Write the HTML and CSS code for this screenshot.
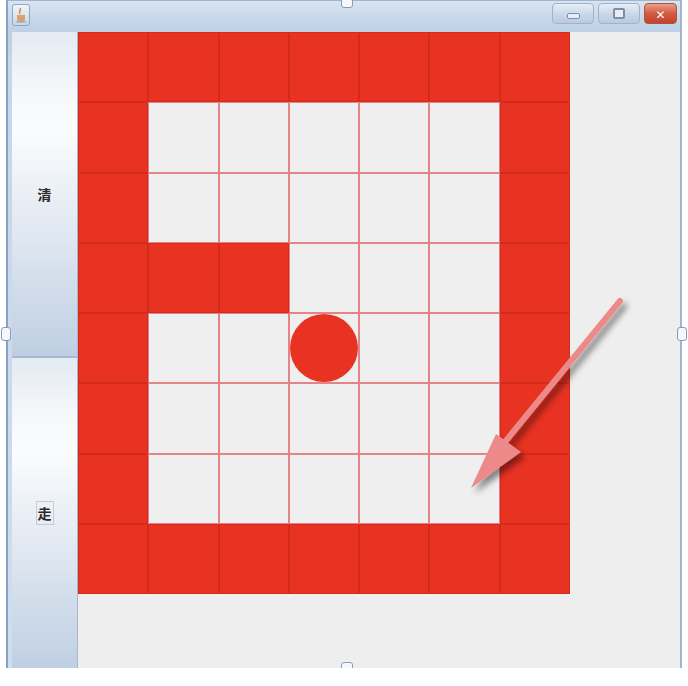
FILE: index.html
```html
<!DOCTYPE html>
<html>
<head>
<meta charset="utf-8">
<link rel="stylesheet" href="styles.css">
</head>
<body>
<div class="window">
  <div class="titlebar">
    <div class="appicon">
      <svg width="14" height="16" viewBox="0 0 14 16"><path d="M6 1 C8 3 4 4 6 7" stroke="#e08a3a" stroke-width="1.6" fill="none"/><path d="M3 8 h8 v4 a3 3 0 0 1 -3 3 h-2 a3 3 0 0 1 -3 -3z" fill="#d9a070"/><path d="M2 15 h10" stroke="#8aa0c0" stroke-width="1"/></svg>
    </div>
    <div class="spacer"></div>
    <div class="tbtn"><span class="min-glyph"></span></div>
    <div class="tbtn"><span class="max-glyph"></span></div>
    <div class="tbtn close"><span class="x-glyph">✕</span></div>
  </div>
  <div class="client">
    <div class="sidebar">
      <div class="sbtn"><span>清</span></div>
      <div class="sbtn"><span class="focus">走</span></div>
    </div>
    <div class="board">
      <div class="c r"></div><div class="c r"></div><div class="c r"></div><div class="c r"></div><div class="c r"></div><div class="c r"></div><div class="c r"></div>
      <div class="c r"></div><div class="c w"></div><div class="c w"></div><div class="c w"></div><div class="c w"></div><div class="c w"></div><div class="c r"></div>
      <div class="c r"></div><div class="c w"></div><div class="c w"></div><div class="c w"></div><div class="c w"></div><div class="c w"></div><div class="c r"></div>
      <div class="c r"></div><div class="c r"></div><div class="c r"></div><div class="c w"></div><div class="c w"></div><div class="c w"></div><div class="c r"></div>
      <div class="c r"></div><div class="c w"></div><div class="c w"></div><div class="c w"><span class="ball"></span></div><div class="c w"></div><div class="c w"></div><div class="c r"></div>
      <div class="c r"></div><div class="c w"></div><div class="c w"></div><div class="c w"></div><div class="c w"></div><div class="c w"></div><div class="c r"></div>
      <div class="c r"></div><div class="c w"></div><div class="c w"></div><div class="c w"></div><div class="c w"></div><div class="c w"></div><div class="c r"></div>
      <div class="c r"></div><div class="c r"></div><div class="c r"></div><div class="c r"></div><div class="c r"></div><div class="c r"></div><div class="c r"></div>
    </div>
  </div>
  <span class="handle h-top"></span>
  <span class="handle h-left"></span>
  <span class="handle h-right"></span>
  <span class="handle h-bottom"></span>
</div>
<svg class="arrow" width="688" height="686" viewBox="0 0 688 686">
  <defs>
    <filter id="sh" x="-20%" y="-20%" width="140%" height="140%">
      <feDropShadow dx="4" dy="5" stdDeviation="3" flood-color="#000" flood-opacity="0.45"/>
    </filter>
  </defs>
  <g filter="url(#sh)">
    <line x1="620" y1="301" x2="500" y2="448" stroke="#ec8a8a" stroke-width="6" stroke-linecap="round"/>
    <polygon points="471,488 496,434 521,452" fill="#ec8a8a"/>
  </g>
</svg>
</body>
</html>
```

FILE: styles.css
```css
html, body {
  margin: 0;
  padding: 0;
  background: #ffffff;
  font-family: "Noto Sans CJK SC", "DejaVu Sans", sans-serif;
}

.window {
  position: relative;
  margin-left: 6px;
  width: 676px;
  height: 668px;
  box-sizing: border-box;
  border-left: 2px solid #86a3c5;
  border-right: 2px solid #9fb6d1;
  border-top: 1px solid #9fb6d1;
  background: linear-gradient(to bottom, #d9e4f0 0px, #c6d6e8 20px, #bccfe4 33px, #c7d6e8 60px, #d0dded 100%);
  display: flex;
  flex-direction: column;
}

.titlebar {
  height: 31px;
  display: flex;
  align-items: center;
  padding: 0 3px 0 4px;
  gap: 4px;
}

.appicon {
  width: 16px;
  height: 20px;
  border: 1px solid #8fa7c4;
  border-radius: 3px;
  background: linear-gradient(#f2f5f9, #c9d6e5);
  display: flex;
  align-items: center;
  justify-content: center;
  margin-top: -4px;
}

.spacer { flex: 1; }

.tbtn {
  width: 40px;
  height: 19px;
  border: 1px solid #9eb2cb;
  border-radius: 4px;
  background: linear-gradient(#e6eef7, #c8d7e8 55%, #b9cbe0);
  display: flex;
  align-items: center;
  justify-content: center;
  margin-top: -6px;
}

.tbtn.close {
  width: 31px;
  border-color: #a8543e;
  background: linear-gradient(#e9a08a, #d25a40 50%, #c2442c);
}

.min-glyph {
  width: 11px;
  height: 4px;
  border-radius: 2px;
  background: #e8edf4;
  border: 1px solid #7d8fa6;
  margin-top: 5px;
}

.max-glyph {
  width: 8px;
  height: 7px;
  border-radius: 2px;
  border: 2px solid #7d8fa6;
  background: #e8edf4;
}

.x-glyph {
  color: #ffffff;
  font-size: 12px;
  font-weight: bold;
  line-height: 1;
}

.client {
  flex: 1;
  display: flex;
  margin-left: 4px;
  background: #eeeeee;
}

.sidebar {
  width: 66px;
  display: grid;
  grid-template-rows: 324px 1fr;
  gap: 2px;
  background: #aab9cc;
}

.sbtn {
  border-right: 1px solid #a7b8cc;
  background: linear-gradient(to bottom, #e4eaf2 0%, #f5f7fa 18%, #fbfcfd 30%, #e2e9f2 60%, #bfcfe3 100%);
  display: flex;
  align-items: center;
  justify-content: center;
  font-size: 14px;
  font-weight: 700;
  color: #2a2a2a;
}

.sbtn span {
  padding: 1px 2px;
  line-height: 18px;
}

.sbtn span.focus {
  border: 1px solid #c6ccd4;
  padding: 2px 1px;
}

.board {
  width: 492px;
  height: 562px;
  display: grid;
  grid-template-columns: repeat(7, 1fr);
  grid-template-rows: repeat(8, 1fr);
}

.c {
  box-sizing: border-box;
  display: flex;
  align-items: center;
  justify-content: center;
}

.c.r {
  background: #e83222;
  border: 1px solid #d22a1c;
}

.c.w {
  background: #efefef;
  border: 1px solid #e48585;
}

.ball {
  width: 68px;
  height: 68px;
  border-radius: 50%;
  background: #e83222;
}

.handle {
  position: absolute;
  width: 12px;
  height: 10px;
  box-sizing: border-box;
  border: 1px solid #8a9bb0;
  border-radius: 3px;
  background: #f4f7fb;
}

.h-top { top: -3px; left: 333px; }
.h-bottom { bottom: -4px; left: 333px; }
.h-left { left: -7px; top: 326px; width: 10px; height: 14px; }
.h-right { right: -7px; top: 326px; width: 10px; height: 14px; }

.arrow {
  position: absolute;
  left: 0;
  top: 0;
  pointer-events: none;
}
```
